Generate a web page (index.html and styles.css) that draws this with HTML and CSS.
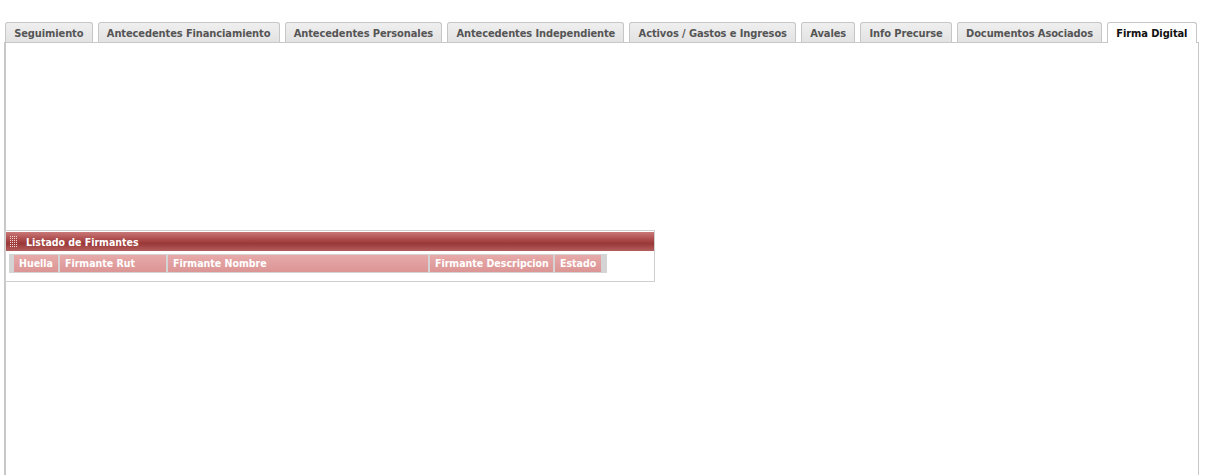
FILE: index.html
```html
<!DOCTYPE html>
<html lang="es">
<head>
<meta charset="utf-8">
<title>Firma Digital</title>
<link rel="stylesheet" href="styles.css">
</head>
<body>
<div class="page">
  <ul class="tabs">
    <li class="tab">Seguimiento</li>
    <li class="tab">Antecedentes Financiamiento</li>
    <li class="tab">Antecedentes Personales</li>
    <li class="tab">Antecedentes Independiente</li>
    <li class="tab">Activos / Gastos e Ingresos</li>
    <li class="tab">Avales</li>
    <li class="tab">Info Precurse</li>
    <li class="tab">Documentos Asociados</li>
    <li class="tab active">Firma Digital</li>
  </ul>
  <div class="panel">
    <div class="box">
      <div class="box-head">
        <svg class="grip" width="7" height="11" viewBox="0 0 7 11">
          <g fill="#f4d8d8">
            <rect x="0" y="0" width="1" height="1"/><rect x="2" y="0" width="1" height="1"/><rect x="4" y="0" width="1" height="1"/><rect x="6" y="0" width="1" height="1"/>
            <rect x="0" y="2" width="1" height="1"/><rect x="2" y="2" width="1" height="1"/><rect x="4" y="2" width="1" height="1"/><rect x="6" y="2" width="1" height="1"/>
            <rect x="0" y="4" width="1" height="1"/><rect x="2" y="4" width="1" height="1"/><rect x="4" y="4" width="1" height="1"/><rect x="6" y="4" width="1" height="1"/>
            <rect x="0" y="6" width="1" height="1"/><rect x="2" y="6" width="1" height="1"/><rect x="4" y="6" width="1" height="1"/><rect x="6" y="6" width="1" height="1"/>
            <rect x="0" y="8" width="1" height="1"/><rect x="2" y="8" width="1" height="1"/><rect x="4" y="8" width="1" height="1"/><rect x="6" y="8" width="1" height="1"/>
            <rect x="0" y="10" width="1" height="1"/><rect x="2" y="10" width="1" height="1"/><rect x="4" y="10" width="1" height="1"/><rect x="6" y="10" width="1" height="1"/>
          </g>
        </svg>
        Listado de Firmantes
      </div>
      <div class="box-body">
        <div class="grid-head">
          <div class="col c-huella">Huella</div>
          <div class="col c-rut">Firmante Rut</div>
          <div class="col c-nombre">Firmante Nombre</div>
          <div class="col c-desc">Firmante Descripcion</div>
          <div class="col c-estado">Estado</div>
        </div>
      </div>
    </div>
  </div>
</div>
</body>
</html>
```
FILE: styles.css
```css
html, body { margin: 0; padding: 0; background: #fff; }
body { font-family: "DejaVu Sans Condensed", "DejaVu Sans", sans-serif; font-size: 11px; }
.page { padding: 22px 32px 0 4px; height: 453px; display: flex; flex-direction: column; }
.tabs { list-style: none; margin: 0 0 0 1px; padding: 0; display: flex; gap: 5px; height: 20px; }
.tab {
  box-sizing: border-box; height: 21px; padding: 4px 8.2px 0 8.2px;
  background: linear-gradient(#efefef, #e2e2e2);
  border: 1px solid #c6c6c6; border-bottom: none; border-radius: 3px 3px 0 0;
  color: #555; font-weight: bold; white-space: nowrap; letter-spacing: -0.1px;
}
.tab.active { background: #fff; color: #111; position: relative; z-index: 1; }
.panel {
  flex: 1; border: 1px solid #c8c8c8; border-bottom: none; border-left-width: 2px;
  padding-top: 187px;
}
.box { width: 648px; border: 1px solid #cfcfcf; margin-left: -1px; padding: 1px 0 8px 0; }
.box-head {
  height: 19px; display: flex; align-items: center; gap: 9px; padding-left: 4px;
  background: linear-gradient(#c97878 0%, #b04f4f 35%, #9a3838 60%, #b45d5d 100%);
  color: #fff; font-weight: bold; font-size: 10.5px;
}
.grip { display: block; flex: none; }
.box-body { padding: 3px 0 0 3px; }
.grid-head { display: flex; width: 598px; height: 19px; background: #d4d4d4; padding: 0 0 0 5px; box-sizing: border-box; gap: 2px; align-items: center; }
.col {
  height: 17px; line-height: 17px; background: linear-gradient(#e7a9a9, #dc9595);
  color: #fff; font-weight: bold; font-size: 10.5px; padding-left: 5px; box-sizing: border-box;
}
.c-huella { width: 44px; }
.c-rut { width: 106px; }
.c-nombre { width: 260px; }
.c-desc { width: 123px; }
.c-estado { width: 46px; }
```
